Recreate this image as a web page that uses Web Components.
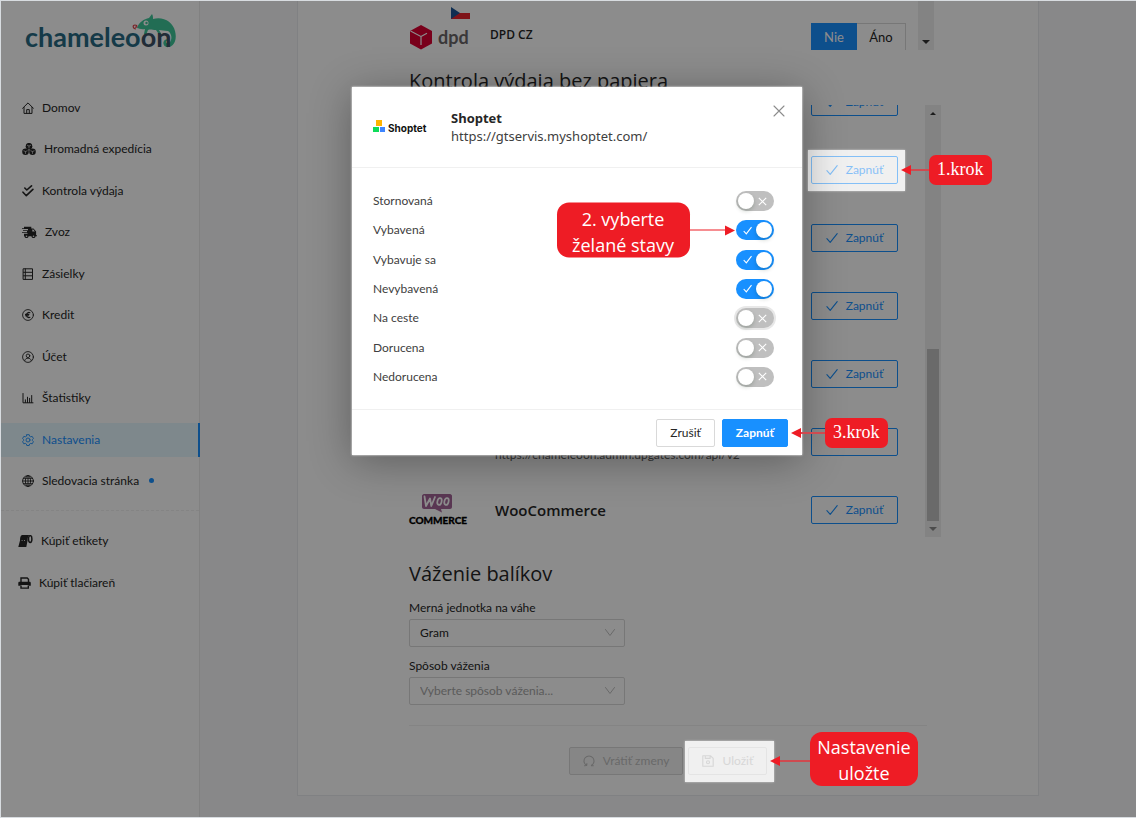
<!DOCTYPE html>
<html lang="sk">
<head>
<meta charset="utf-8">
<meta name="viewport" content="width=device-width, initial-scale=1">
<title>Chameleoon – Nastavenia</title>
<style>
  :root {
    --primary: #1890ff;
    --text: #262626;
    --muted: #bfbfbf;
    --line: #f0f0f0;
    --border: #d9d9d9;
    --red: #ee1c25;
    --ui: Lato, "Open Sans", sans-serif;
    --title: "Open Sans", "Noto Sans", sans-serif;
  }
  body {
    margin: 0;
    padding: 1px 0 1px 1px;
    background: #d8dce0;
    color: var(--text);
    font: 12px/20px var(--ui);
  }
</style>
</head>
<body>
<chameleoon-app></chameleoon-app>

<script>
const define = (name, html, setup) => {
  const template = document.createElement('template');
  template.innerHTML = '<style>*{box-sizing:border-box}[hidden]{display:none}</style>' + html;
  customElements.define(name, class extends HTMLElement {
    constructor() {
      super();
      this.attachShadow({ mode: 'open' }).append(template.content.cloneNode(true));
    }
    connectedCallback() {
      if (setup) setup(this, this.shadowRoot);
    }
  });
};

const S = 'fill="none" stroke="currentColor" stroke-linecap="round" stroke-linejoin="round"';
const ICONS = {
  home: [12, `<g ${S}><path d="M.6 6.3 6 .9l5.4 5.4M2 5.4v6h8v-6M4.7 11.2V7.6h2.6v3.6"/></g>`],
  cubes: [14, `<g fill="currentColor"><circle cx="7" cy="3.200" r="3.300"/><circle cx="3.500" cy="8.700" r="3.300"/><circle cx="10.500" cy="8.700" r="3.300"/></g><g stroke="#fff" stroke-width=".6" fill="none"><path d="M5 2.200 7 3l2-.8M7 3v2.400M1.500 7.700l2 .8 2-.8M3.500 8.500v2.400M8.500 7.700l2 .8 2-.8M10.500 8.500v2.400"/></g>`],
  checks: [12, `<g ${S} stroke-width="1.600"><path d="m2.800 3 2 2L9.500.9M1 7.200l3.300 3.500 6.600-6.300"/></g>`],
  truck: [15, `<g fill="currentColor"><path d="M2 .8h7.300v1.700h2.200l2.600 3v3.800h1v1H2v-2.600h3.500V7H0v-.8h5V5H1v-.8h5V3H0v-.8h2z"/><circle cx="4.500" cy="10.200" r="1.900"/><circle cx="11.500" cy="10.200" r="1.900"/></g><path d="M10.300 3.600h.9l1.700 2h-2.600z" fill="#fff"/><circle cx="4.500" cy="10.200" r=".8" fill="#fff"/><circle cx="11.500" cy="10.200" r=".8" fill="#fff"/>`],
  list: [12, `<g ${S}><path d="M1.500.8h9v10.600h-9zM1.500 4.300h9M1.500 7.800h9M3.300.8v10.600"/></g>`],
  euro: [12, `<g ${S} stroke-width=".9"><circle cx="6" cy="6" r="5.400"/><path stroke-width="1.100" d="M7.900 3.700a2.300 2.300 0 0 0-3.300 1.500v1.600a2.300 2.300 0 0 0 3.300 1.500M3.500 5.400h3.400M3.500 6.700h3"/></g>`],
  user: [12, `<g ${S} stroke-width=".9"><circle cx="6" cy="6" r="5.400"/><circle cx="6" cy="4.800" r="1.800"/><path d="M2.700 9.600c.4-1.700 1.700-2.400 3.300-2.400s2.900.7 3.300 2.400"/></g>`],
  stats: [12, `<g ${S} stroke-width="1"><path d="M1 1.500v9.300h10M3.400 10.500V7.800M5.500 10.500V5.200M7.600 10.500V6.300M9.700 10.500V3.500"/></g>`],
  gear: [12, `<g ${S} stroke-width=".9"><path d="M4.800.7h2.400l.4 1.500 1.100.6 1.500-.4 1.200 2.100-1 1.100v1l1 1.100-1.200 2.100-1.500-.4-1.100.600-.4 1.500H4.800l-.4-1.500-1.100-.6-1.500.4L.6 7.700l1-1.100v-1l-1-1.100 1.200-2.100 1.500.4 1.100-.6z"/><circle cx="6" cy="6" r="2"/></g>`],
  globe: [12, `<g ${S} stroke-width=".9"><circle cx="6" cy="6" r="5.400"/><ellipse cx="6" cy="6" rx="2.600" ry="5.400"/><path d="M6 .6v10.800M.6 6h10.800M1.400 3.300h9.200M1.400 8.700h9.200"/></g>`],
  roll: [15, `<path d="M4 0h7.500C10 1 9.600 3 9.600 5.500L8.300 12H.3L2 5.500C2 3 2.300.7 4 0z" fill="currentColor"/><ellipse cx="12.200" cy="4" rx="1.700" ry="3.400" fill="none" stroke="currentColor" stroke-width="1.500"/><path d="M3.600 5.500h1M6 5.500h1" stroke="#fff" stroke-width=".8"/>`],
  printer: [13, `<path d="M3 5V1h6.200L10.500 2.300V5" fill="none" stroke="currentColor" stroke-width="1.400"/><path d="M1.500 4.800h10c.8 0 1.300.5 1.300 1.300v2.700h-2.200V8H2.600v.8H.3V6.100c0-.8.5-1.300 1.200-1.300z" fill="currentColor"/><path d="M3 8.600v2.500h7.300V8.600" fill="none" stroke="currentColor" stroke-width="1.400"/>`],
  check: [12, `<path ${S} stroke-width="1.100" d="m.9 6.700 3.300 3.700L11.200 1.700"/>`],
  reload: [12, `<g ${S} stroke-width="1.100"><path d="M3.500 10.300A5 5 0 1 1 8.500 10.300M1.500 10.700l2.200-.2.200-2M10.300 10.700H8.400"/></g>`],
  save: [12, `<g ${S} stroke-width="1.100"><path d="M.8.8h7.800l2.600 2.600v7.800H.8zM3.300.9v2.500h4.800V.9"/><circle cx="6" cy="7.200" r="1.500"/></g>`],
  close: [12, `<path ${S} stroke-width="1.100" d="m1 1 10 10M11 1 1 11"/>`],
  down: [12, `<path ${S} d="m1.500 2.500 4.500 6 4.500-6"/>`]
};
define('ui-icon', `
  <style>:host{display:inline-flex;flex:none} svg{display:block}</style>
  <span></span>`,
  (host, root) => {
    const icon = ICONS[host.getAttribute('name')];
    if (!icon) return;
    const [w, art] = icon;
    root.querySelector('span').innerHTML =
      `<svg aria-hidden="true" width="${w}" height="12" viewBox="0 0 ${w} 12">${art}</svg>`;
  });

/* ---------- brand marks ---------- */
define('brand-logo', `
  <style>
    :host{display:block}
    svg{display:block;overflow:visible}
    text{font:700 27px Lato,sans-serif}
  </style>
  <svg width="156" height="38" viewBox="0 0 156 38" role="img" aria-label="chameleoon">
    <g transform="translate(-3 0)">
      <path fill="#3fc79a" d="M117 17c2-6 7-9 12-10l3-4c1 2 1 3 1 5 10-3 20 3 22 12 2 7 0 15-6 16-4 1-7-3-5-6 1-2 4-2 5 0-2-1-3 0-3 1 0 2 4 2 5-2 1-3 0-7-3-9-4 0-6-1-9-1l3 5-2 1-4-6c-4 0-5-1-8 0l-2 5-2-1 1-5c-4 1-6-1-8-1z"/>
      <circle cx="126" cy="12" r="2.500" fill="#fff"/><circle cx="126.500" cy="12" r="1.200" fill="#3fc79a"/>
      <path d="M116 18c-3 0-4-4-1-4 3 0 2 3 0 2" fill="none" stroke="#e0404a" stroke-width="1.200"/>
    </g>
    <text x="2" y="36" fill="#276a84">chameleo<tspan fill="#3c5064">on</tspan></text>
  </svg>`);

define('dpd-logo', `
  <style>:host{display:block} svg{display:block;overflow:visible} text{font:700 18px Lato,sans-serif;fill:#6a6668}</style>
  <svg width="61" height="44" viewBox="0 0 61 44" role="img" aria-label="dpd">
    <path d="M42 0h19v6H42z" fill="#fff"/><path d="M42 6h19v6H42z" fill="#e8252f"/><path d="m42 0 9 6-9 6z" fill="#1c5496"/>
    <path d="M1 24 12 18l11 6v12.500L12 42.500 1 36.500z" fill="#dc0032"/>
    <path d="m1.500 24 10.500 5.500V38M12 29.500l6-3.200" fill="none" stroke="#fff" stroke-width="1.200"/>
    <text x="29" y="37">dpd</text>
  </svg>`);

define('woo-logo', `
  <style>:host{display:block} svg{display:block;overflow:visible}
    .com{font:900 10px Lato,sans-serif;fill:#000;stroke:#000;stroke-width:.3}</style>
  <svg width="58" height="34" viewBox="0 0 58 34" role="img" aria-label="WooCommerce">
    <path d="M15 1h26c1 0 2 1 2 2v11c0 1-1 2-2 2h-9l1 3.500-7-3.500H15c-1 0-2-1-2-2V3c0-1 1-2 2-2z" fill="#a46497"/>
    <path d="m15.500 3.500 1.500 9.500 4-7.500 1.300 7.500L26 4" fill="none" stroke="#fff" stroke-width="1.800" stroke-linejoin="round" stroke-linecap="round"/>
    <ellipse cx="30.500" cy="8.500" rx="2.100" ry="3.500" transform="rotate(14 30.500 8.500)" fill="none" stroke="#fff" stroke-width="1.700"/>
    <ellipse cx="37.500" cy="8.500" rx="2.100" ry="3.500" transform="rotate(14 37.500 8.500)" fill="none" stroke="#fff" stroke-width="1.700"/>
    <text class="com" x="0" y="31">COMMERCE</text>
  </svg>`);

define('shoptet-logo', `
  <style>:host{display:block} svg{display:block;overflow:visible} text{font:700 10px Inter,"Liberation Sans",sans-serif;fill:#111}</style>
  <svg width="56" height="14" viewBox="0 0 56 14" role="img" aria-label="Shoptet">
    <path d="M3 0h6v6H3z" fill="#ffb400"/><path d="M0 7h6v5H0z" fill="#0fdc5a"/><path d="M7 7h5v5H7z" fill="#3e85ff"/>
    <text x="15" y="12">Shoptet</text>
  </svg>`);

/* ---------- controls ---------- */
define('ui-button', `
  <style>
    :host{display:block;position:relative}
    button{display:flex;align-items:center;justify-content:center;gap:8px;width:100%;height:28px;padding:0 13px;
      font:inherit;color:var(--text);background:#fff;border:1px solid var(--border);border-radius:2px;white-space:nowrap;cursor:pointer}
    :host([kind=outline]) button{color:var(--primary);border-color:var(--primary)}
    :host([kind=primary]) button{color:#fff;background:var(--primary);border-color:var(--primary);font-weight:700}
    button:disabled{color:var(--muted);background:#f5f5f5;cursor:default}
    :host([spotlight]){z-index:11}
    :host([spotlight])::before{content:"";position:absolute;inset:-6px -7px -7px -3px;background:#f0f0f0;box-shadow:0 0 2px #d0d0d0}
    :host([spotlight]) button{position:relative;opacity:.5;background:#f0f0f0}
  </style>
  <button type="button"><slot></slot></button>
  <slot name="callout"></slot>`,
  (host, root) => {
    const button = root.querySelector('button');
    button.disabled = host.hasAttribute('disabled');
    if (host.hasAttribute('icon') && !button.querySelector('ui-icon')) {
      const icon = document.createElement('ui-icon');
      icon.setAttribute('name', host.getAttribute('icon'));
      button.prepend(icon);
    }
  });

define('ui-segment', `
  <style>
    :host{display:block}
    fieldset{display:flex;margin:0;padding:0;border:0}
    label{display:grid;place-items:center;height:28px;width:46px;border:1px solid var(--border);font-size:13px}
    label:has(:checked){background:var(--primary);border-color:var(--primary);color:#fff}
    label+label{border-left:0;width:49px}
    input{appearance:none;margin:0;position:absolute}
  </style>
  <fieldset aria-label="DPD CZ">
    <label><input type="radio" name="v" checked>Nie</label>
    <label><input type="radio" name="v">Áno</label>
  </fieldset>`);

define('ui-select', `
  <style>
    :host{display:grid;gap:1px;width:216px}
    .box{display:grid;align-items:center}
    select,ui-icon{grid-area:1/1}
    select{appearance:none;width:100%;height:28px;margin:0;padding:0 30px 0 10px;border:1px solid var(--border);border-radius:2px;
      background:#fff;font:inherit;color:var(--text)}
    :host([placeholder]) select{color:#a6a6a6}
    ui-icon{justify-self:end;margin-right:9px;color:var(--muted);pointer-events:none}
  </style>
  <label for="s"></label>
  <div class="box"><select id="s"><option></option></select><ui-icon name="down"></ui-icon></div>`,
  (host, root) => {
    root.querySelector('label').textContent = host.getAttribute('label');
    root.querySelector('option').textContent = host.getAttribute('value');
  });

define('ui-switch', `
  <style>
    :host{display:block}
    label{display:flex;align-items:center;justify-content:space-between;height:20px}
    .sw{position:relative;display:grid;color:#fff}
    input{grid-area:1/1;appearance:none;width:38px;height:20px;margin:0;border-radius:10px;background:var(--muted);outline:0}
    input::before{content:"";display:block;width:16px;height:16px;margin:2px;border-radius:50%;background:#fff;box-shadow:0 2px 4px #00230b33}
    input:checked{background:var(--primary)}
    input:checked::before{margin-left:20px}
    :host([ring]) input{box-shadow:0 0 0 2px #e8e8e8}
    .mark{grid-area:1/1;place-self:center end;width:9px;height:9px;margin:0 7px;pointer-events:none}
    .on{place-self:center start;display:none}
    input:checked~.on{display:block} input:checked~.off{display:none}
  </style>
  <label><span class="name"></span>
    <span class="sw"><input type="checkbox" role="switch">
      <svg class="mark on" viewBox="0 0 9 9"><path d="m.7 5 2.600 2.900L8.500 1.200" fill="none" stroke="currentColor" stroke-width="1.100"/></svg>
      <svg class="mark off" viewBox="0 0 9 9"><path d="m.8.8 7.400 7.400M8.200.8.8 8.200" fill="none" stroke="currentColor" stroke-width="1.100"/></svg>
      <slot></slot>
    </span>
  </label>`,
  (host, root) => {
    root.querySelector('.name').textContent = host.getAttribute('label');
    root.querySelector('input').checked = host.hasAttribute('on');
  });

/* Decorative scrollbar: track, thumb and arrow heads */
define('scroll-rail', `
  <style>
    :host{display:flex;flex-direction:column;justify-content:space-between;flex:none;align-items:center;width:16px;background:#efefef;color:#8a8a8a}
    svg{display:block;flex:none;margin:5px 0}
    .thumb{flex:none;width:12px;height:172px;margin-top:auto;background:#c1c1c1}
    :host([only-down]) .up,:host([only-down]) .thumb{display:none}
    :host([only-down]){justify-content:flex-end}
    .up,:host([only-down]) .down{color:#333}
  </style>
  <svg class="up" width="8" height="6"><path d="M1 5l3-3 3 3z" fill="currentColor"/></svg>
  <div class="thumb"></div>
  <svg class="down" width="8" height="6"><path d="M0 1l4 4 4-4z" fill="currentColor"/></svg>`);

/* Red tutorial callout with an arrow; floats beside its anchor */
define('step-callout', `
  <style>
    :host{position:absolute;top:50%;left:calc(100% + 3px);translate:0 -50%;display:flex;align-items:center;color:#fff;width:max-content;text-align:center}
    .box{padding:2px 8px 3px;border-radius:7px;background:var(--red);font:18px/25px "Liberation Serif",serif}
    :host([large]) .box{margin-bottom:4px;padding:2px 7px 0;border-radius:12px;font:18px/26px var(--title)}
    .arrow{display:flex;align-items:center;width:var(--reach,28px)}
    .arrow::before{content:"";border:5px solid transparent;border-left:0;border-right:10px solid var(--red)}
    .arrow::after{content:"";flex:1;height:2px;background:#cf4a50}
    :host([large]) .arrow{width:40px}
    :host([toward=right]){left:auto;right:calc(100% + 1px);flex-direction:row-reverse}
    :host([toward=right]) .arrow{width:45px;rotate:180deg}
    :host([toward=right]) .arrow::after{height:1px;background:var(--red)}
    :host([toward=right]) .box{margin:0;padding:3px 16px 0 15px}
  </style>
  <div class="arrow"></div><div class="box"><slot></slot></div>`);

/* ---------- side navigation ---------- */
define('nav-item', `
  <style>
    :host{display:block}
    a{display:flex;align-items:center;gap:8px;height:34px;padding:0 18px 0 21px;color:inherit;text-decoration:none;white-space:nowrap}
    :host([buy]) a{padding-left:17px}
    :host([active]) a{background:#e6f7ff;color:var(--primary);box-shadow:inset -2px 0 var(--primary)}
    i{width:5px;height:5px;margin-left:2px;border-radius:50%;background:var(--primary)}
  </style>
  <a href="#"><slot></slot><i hidden></i></a>`,
  (host, root) => {
    const link = root.querySelector('a');
    if (!link.querySelector('ui-icon')) {
      const icon = document.createElement('ui-icon');
      icon.setAttribute('name', host.getAttribute('icon'));
      link.prepend(icon);
    }
    root.querySelector('i').hidden = !host.hasAttribute('dot');
    if (host.hasAttribute('active')) link.setAttribute('aria-current', 'page');
  });

define('side-nav', `
  <style>
    :host{display:block;flex:none;width:199px;background:#fff;border-right:1px solid #ececec}
    brand-logo{margin:10px 22px 42px}
    nav{display:flex;flex-direction:column;justify-content:space-between;height:407px;margin-right:-1px}
    .buy{height:76px;margin-top:13px}
    hr{margin:12px 0 0;border:0;border-top:1px dashed #f0f0f0}
  </style>
  <brand-logo></brand-logo>
  <nav aria-label="Menu">
    <nav-item icon="home">Domov</nav-item>
    <nav-item icon="cubes">Hromadná expedícia</nav-item>
    <nav-item icon="checks">Kontrola výdaja</nav-item>
    <nav-item icon="truck">Zvoz</nav-item>
    <nav-item icon="list">Zásielky</nav-item>
    <nav-item icon="euro">Kredit</nav-item>
    <nav-item icon="user">Účet</nav-item>
    <nav-item icon="stats">Štatistiky</nav-item>
    <nav-item icon="gear" active>Nastavenia</nav-item>
    <nav-item icon="globe" dot>Sledovacia stránka</nav-item>
  </nav>
  <hr>
  <nav class="buy" aria-label="Nákup">
    <nav-item icon="roll" buy>Kúpiť etikety</nav-item>
    <nav-item icon="printer" buy>Kúpiť tlačiareň</nav-item>
  </nav>`);

/* ---------- settings card ---------- */
define('shop-row', `
  <style>
    :host{display:grid;grid-template-columns:86px 1fr 87px;align-items:center;height:68px;flex:none}
    .text{line-height:26px;color:#595959}
    ::slotted(b){display:block;font:600 15px/26px var(--title);color:var(--text)}
  </style>
  <div><slot name="logo"></slot></div>
  <div class="text"><slot></slot></div>
  <slot name="action"><ui-button kind="outline" icon="check">Zapnúť</ui-button></slot>`);

define('settings-card', `
  <style>
    :host{display:block;max-width:742px;box-sizing:border-box;margin:0 auto;padding:0 111px 20px;background:#fff;border:1px solid #e9ebef;border-top:0}
    h2{margin:16px 0 9px;font:500 20px/30px var(--title)}
    .carriers{display:flex;align-items:flex-start;height:49px;margin-right:-7px;overflow:hidden}
    .carriers dpd-logo{margin-top:6px}
    .carriers b{flex:1;margin:24px 0 0 20px;font:600 12px/20px var(--title)}
    .carriers ui-segment{margin:22px 12px 0 0}
    .carriers scroll-rail{align-self:stretch}
    .shops{display:flex;gap:27px;height:432px;margin-right:-14px;overflow-x:visible;overflow-y:clip}
    .rows{flex:1;margin-top:-37px}
    .shops+h2{margin:22px 0 9px}
    ui-select+ui-select{margin-top:9px}
    footer{display:flex;justify-content:center;gap:5px;margin-top:20px;padding-top:21px;border-top:1px solid #f0f0f0}
  </style>
  <div class="carriers">
    <dpd-logo></dpd-logo><b>DPD CZ</b><ui-segment></ui-segment><scroll-rail only-down></scroll-rail>
  </div>
  <h2>Kontrola výdaja bez papiera</h2>
  <div class="shops">
    <div class="rows">
      <shop-row></shop-row>
      <shop-row>
        <ui-button slot="action" kind="outline" icon="check" spotlight>Zapnúť<step-callout slot="callout">1.krok</step-callout></ui-button>
      </shop-row>
      <shop-row></shop-row>
      <shop-row></shop-row>
      <shop-row></shop-row>
      <shop-row><b>Upgates</b>https://chameleoon.admin.upgates.com/api/v2</shop-row>
      <shop-row><woo-logo slot="logo"></woo-logo><b>WooCommerce</b></shop-row>
    </div>
    <scroll-rail></scroll-rail>
  </div>
  <h2>Váženie balíkov</h2>
  <ui-select label="Merná jednotka na váhe" value="Gram"></ui-select>
  <ui-select label="Spôsob váženia" value="Vyberte spôsob váženia..." placeholder></ui-select>
  <footer>
    <ui-button icon="reload" disabled>Vrátiť zmeny</ui-button>
    <ui-button icon="save" disabled spotlight>Uložiť<step-callout slot="callout" large>Nastavenie<br>uložte</step-callout></ui-button>
  </footer>`);

/* ---------- modal ---------- */
define('shoptet-modal', `
  <style>
    :host{position:absolute;inset:0;z-index:12;display:flex;justify-content:center;align-items:flex-start;padding:86px 0 0 17px;box-sizing:border-box;pointer-events:none}
    dialog{position:relative;display:block;width:450px;margin:0;padding:0;border:0;background:#fff;color:#404040;pointer-events:auto;
      box-shadow:0 0 2px #fff,0 6px 40px #0005}
    header{display:flex;align-items:center;height:81px;padding:0 17px 0 21px;border-bottom:1px solid var(--line)}
    h1{margin:0;font:700 13px/18px var(--title);color:var(--text)}
    p{margin:0;font:13px/18px "Noto Sans",sans-serif}
    header div{flex:1;margin-left:22px}
    .close{display:grid;place-items:center;align-self:flex-start;width:12px;height:12px;margin-top:18px;padding:0;border:0;background:none;color:#8c8c8c}
    .states{display:flex;flex-direction:column;justify-content:space-between;height:196px;margin:23px 28px 22px 21px}
    footer{display:flex;justify-content:flex-end;gap:7px;padding:9px 14px 8px;border-top:1px solid var(--line)}
    step-callout{--reach:34px}
  </style>
  <dialog open aria-labelledby="t">
    <header><shoptet-logo></shoptet-logo>
      <div><h1 id="t">Shoptet</h1><p>https://gtservis.myshoptet.com/</p></div>
      <button class="close" type="button" aria-label="Zavrieť"><ui-icon name="close"></ui-icon></button>
    </header>
    <div class="states">
      <ui-switch label="Stornovaná"></ui-switch>
      <ui-switch label="Vybavená" on><step-callout large toward="right">2. vyberte<br>želané stavy</step-callout></ui-switch>
      <ui-switch label="Vybavuje sa" on></ui-switch>
      <ui-switch label="Nevybavená" on></ui-switch>
      <ui-switch label="Na ceste" ring></ui-switch>
      <ui-switch label="Dorucena"></ui-switch>
      <ui-switch label="Nedorucena"></ui-switch>
    </div>
    <footer>
      <ui-button>Zrušiť</ui-button>
      <ui-button kind="primary">Zapnúť<step-callout slot="callout">3.krok</step-callout></ui-button>
    </footer>
  </dialog>`);

define('chameleoon-app', `
  <style>
    :host{position:relative;display:flex;min-height:calc(100vh - 2px);background:#f7f8fa}
    main{flex:1;padding-bottom:21px}
    .mask{position:absolute;inset:0;z-index:10;background:#00000073}
  </style>
  <side-nav></side-nav>
  <main><settings-card></settings-card></main>
  <div class="mask"></div>
  <shoptet-modal></shoptet-modal>`);
</script>
</body>
</html>
